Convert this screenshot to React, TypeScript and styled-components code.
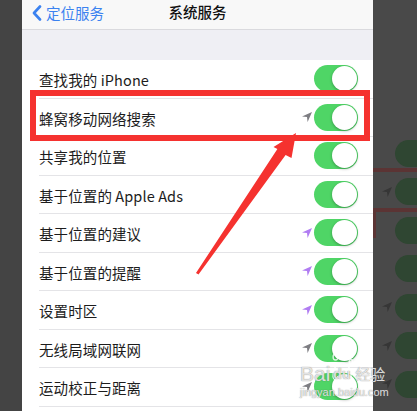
import styled, { createGlobalStyle } from 'styled-components';

const GlobalStyle = createGlobalStyle`
  html, body {
    margin: 0;
    padding: 0;
    background: #464646;
  }
  body {
    font-family: "Noto Sans CJK SC", "Noto Sans", sans-serif;
  }
`;

type Service = { label: string; arrow?: 'gray' | 'purple' };

const services: Service[] = [
  { label: '查找我的 iPhone' },
  { label: '蜂窝移动网络搜索', arrow: 'gray' },
  { label: '共享我的位置' },
  { label: '基于位置的 Apple Ads' },
  { label: '基于位置的建议', arrow: 'purple' },
  { label: '基于位置的提醒', arrow: 'purple' },
  { label: '设置时区', arrow: 'purple' },
  { label: '无线局域网联网', arrow: 'gray' },
  { label: '运动校正与距离', arrow: 'gray' },
];

const dimArrows = [false, true, false, false, true, true, true];

const arrowColors = { gray: '#7d7d82', purple: '#b07cf2' };

const LocationArrow = ({ color }: { color: string }) => (
  <svg width="10" height="10" viewBox="0 0 10 10">
    <path d="M10 0 L0 4.4 L5 5 L5.6 10 Z" fill={color} />
  </svg>
);

const App = () => {
  return (
    <>
      <GlobalStyle />
      <Page>
        <Bezel />
        <Screen>
          <NavBar>
            <BackLink>
              <svg width="10" height="16" viewBox="0 0 10 16">
                <polyline points="8,1.5 2,8 8,14.5" fill="none" stroke="#3b82f0" strokeWidth="2.6" strokeLinecap="round" strokeLinejoin="round" />
              </svg>
              定位服务
            </BackLink>
            <NavTitle>系统服务</NavTitle>
          </NavBar>
          <SectionGap />
          <List>
            {services.map((s) => (
              <Row key={s.label}>
                <Label>{s.label}</Label>
                <Controls>
                  {s.arrow && <LocationArrow color={arrowColors[s.arrow]} />}
                  <Toggle>
                    <Knob />
                  </Toggle>
                </Controls>
              </Row>
            ))}
          </List>
        </Screen>
        <DimStrip>
          {dimArrows.map((a, i) => (
            <DimRow key={i}>
              {a && <LocationArrow color="#363636" />}
              <DimToggle />
            </DimRow>
          ))}
        </DimStrip>

        <HighlightBox />
        <Overlay width="417" height="411" viewBox="0 0 417 411">
          <polygon
            points="296,133 291.5,158 285.6,154.9 198.5,274.5 196,273 277.4,149.1 273.5,147"
            fill="#f5322f"
          />
          <rect x="373" y="168" width="44" height="4" fill="#5b3434" />
          <rect x="373" y="208" width="44" height="4" fill="#5b3434" />
          <rect x="373" y="208" width="3" height="30" fill="#5b3434" />
        </Overlay>

        <Watermark>
          <BrandLine>
            <span>Bai</span>
            <Paw>
              <svg width="22" height="34" viewBox="0 0 22 34">
                <g fill="none" stroke="rgba(255,255,255,0.8)" strokeWidth="1.4">
                  <ellipse cx="4.5" cy="7" rx="2.4" ry="3" />
                  <ellipse cx="10.5" cy="3.2" rx="2.4" ry="2.6" />
                  <ellipse cx="16.8" cy="5.5" rx="2.4" ry="3" />
                  <ellipse cx="20" cy="12" rx="1.8" ry="2.6" />
                  <path d="M11 13 C4 13 1.5 22 2 27 C3 33 19 33 20 27 C20.5 22 18 13 11 13 Z" />
                </g>
              </svg>
              <PawText>du</PawText>
            </Paw>
            <Jingyan>经验</Jingyan>
          </BrandLine>
          <Url>jingyan.baidu.com</Url>
        </Watermark>
      </Page>
    </>
  );
};

const Page = styled.div`
  position: relative;
  display: flex;
  width: 417px;
  height: 411px;
  overflow: hidden;
  background: #474747;
`;
const Bezel = styled.div`
  width: 22px;
  flex: none;
  background: #444444;
`;
const Screen = styled.div`
  width: 351px;
  flex: none;
  display: flex;
  flex-direction: column;
  background: #efeff4;
`;
const NavBar = styled.div`
  position: relative;
  height: 29px;
  flex: none;
  display: flex;
  align-items: center;
  justify-content: center;
  background: #f8f8f8;
  border-bottom: 1px solid #dadade;
`;
const BackLink = styled.div`
  position: absolute;
  left: 10px;
  top: 3px;
  display: flex;
  align-items: center;
  gap: 4px;
  font-size: 14.5px;
  color: #3b82f0;
  line-height: 20px;
`;
const NavTitle = styled.div`
  font-size: 14.5px;
  font-weight: 500;
  color: #111;
  margin-top: -6px;
`;
const SectionGap = styled.div`
  height: 30px;
  flex: none;
`;
const List = styled.div`
  flex: 1;
  background: #ffffff;
`;
const Row = styled.div`
  height: 38.5px;
  display: flex;
  align-items: center;
  justify-content: space-between;
  margin-left: 17px;
  padding-right: 15px;
  padding-top: 2px;
  border-bottom: 1px solid #e4e4e7;
  box-sizing: border-box;
`;
const Label = styled.span`
  font-size: 14.5px;
  color: #1c1c1c;
  letter-spacing: 0.1px;
`;
const Controls = styled.div`
  display: flex;
  align-items: center;
  gap: 2px;
  margin-top: -2px;
`;
const Toggle = styled.div`
  width: 44px;
  height: 27px;
  border-radius: 14px;
  background: #4fd566;
  display: flex;
  align-items: center;
  justify-content: flex-end;
  padding-right: 1px;
  box-sizing: border-box;
`;
const Knob = styled.div`
  width: 25px;
  height: 25px;
  border-radius: 50%;
  background: #ffffff;
  box-shadow: 0 1px 3px rgba(0, 0, 0, 0.3);
`;
const DimStrip = styled.div`
  flex: 1;
  display: flex;
  flex-direction: column;
  padding-top: 134px;
  background: #494949;
`;
const DimRow = styled.div`
  height: 38.5px;
  flex: none;
  display: flex;
  align-items: center;
  justify-content: flex-end;
  gap: 3px;
  margin-right: -22px;
`;
const DimToggle = styled.div`
  width: 44px;
  height: 27px;
  border-radius: 14px;
  background: #2f4632;
`;
const HighlightBox = styled.div`
  position: absolute;
  left: 30px;
  top: 90px;
  width: 340px;
  height: 51px;
  box-sizing: border-box;
  border: 6.5px solid #f5322f;
`;
const Overlay = styled.svg`
  position: absolute;
  left: 0;
  top: 0;
  pointer-events: none;
`;
const Watermark = styled.div`
  position: absolute;
  left: 300px;
  top: 350px;
  display: flex;
  flex-direction: column;
  color: rgba(255, 255, 255, 0.8);
  text-shadow: 0 0 1px rgba(90, 90, 90, 0.9);
  font-family: "Liberation Sans", Arial, sans-serif;
`;
const BrandLine = styled.div`
  display: flex;
  align-items: flex-end;
  font-size: 21px;
  line-height: 21px;
  height: 34px;
`;
const Paw = styled.div`
  position: relative;
  width: 22px;
  height: 34px;
  margin-left: 1px;
`;
const PawText = styled.span`
  position: absolute;
  left: 2px;
  bottom: 3px;
  font-size: 14px;
  font-weight: 700;
  line-height: 14px;
`;
const Jingyan = styled.span`
  font-family: "Noto Sans CJK SC", sans-serif;
  font-size: 15px;
  line-height: 18px;
  margin-left: 2px;
  margin-bottom: 1px;
`;
const Url = styled.div`
  font-size: 11px;
  line-height: 12px;
  margin-top: 2px;
`;

export default App;
